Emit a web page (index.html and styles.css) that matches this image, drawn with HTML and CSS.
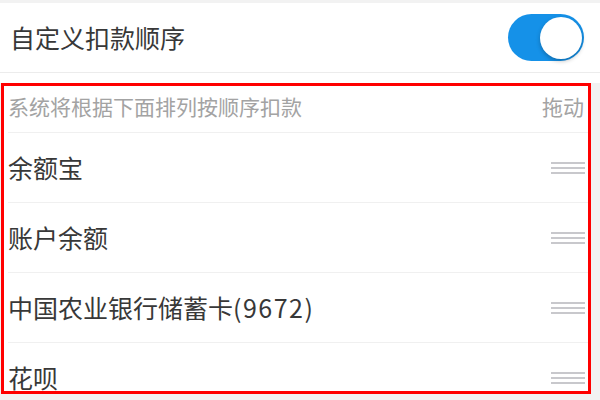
FILE: index.html
```html
<!DOCTYPE html>
<html lang="zh-CN">
<head>
<meta charset="utf-8">
<link rel="stylesheet" href="styles.css">
</head>
<body>
<div class="page">
  <div class="title-row">
    <span class="title">自定义扣款顺序</span>
    <span class="switch"><span class="knob"></span></span>
  </div>
  <div class="gap"></div>
  <section class="order">
    <div class="order-head">
      <span class="hint">系统将根据下面排列按顺序扣款</span>
      <span class="drag-label">拖动</span>
    </div>
    <div class="item"><span class="name">余额宝</span><span class="handle"><i></i><i></i><i></i></span></div>
    <div class="item"><span class="name">账户余额</span><span class="handle"><i></i><i></i><i></i></span></div>
    <div class="item"><span class="name">中国农业银行储蓄卡<span class="num">(9672)</span></span><span class="handle"><i></i><i></i><i></i></span></div>
    <div class="item last"><span class="name">花呗</span><span class="handle"><i></i><i></i><i></i></span></div>
  </section>
</div>
</body>
</html>
```

FILE: styles.css
```css
html, body {
  margin: 0;
  padding: 0;
  background: #f2f2f2;
}
body {
  width: 600px;
  height: 400px;
  overflow: hidden;
  font-family: "Noto Sans CJK SC", "Noto Sans", sans-serif;
  color: #333;
}
.page {
  padding-top: 3px;
  display: flex;
  flex-direction: column;
}
.title-row {
  background: #fff;
  height: 69px;
  border-bottom: 1px solid #ececec;
  display: flex;
  align-items: center;
  justify-content: space-between;
  padding: 0 16px 0 10px;
}
.title {
  font-size: 25px;
  line-height: 1;
  color: #383838;
}
.switch {
  width: 76px;
  height: 47px;
  border-radius: 24px;
  background: #1591e8;
  display: flex;
  align-items: center;
  justify-content: flex-end;
  padding-right: 2px;
  box-sizing: border-box;
}
.knob {
  width: 42px;
  height: 42px;
  border-radius: 50%;
  background: #fff;
  box-shadow: 0 2px 4px rgba(0,0,0,0.25);
}
.gap {
  height: 10px;
  background: #fff;
}
.order {
  margin-left: 1px;
  width: 590px;
  height: 311px;
  box-sizing: border-box;
  border: 3px solid #ff0000;
  background: #fff;
  overflow: hidden;
  padding-left: 4px;
}
.order-head {
  height: 46px;
  display: flex;
  align-items: center;
  justify-content: space-between;
  border-bottom: 1px solid #f0f0f0;
  padding-right: 4px;
  color: #a3a3a3;
  font-size: 21px;
}
.hint, .drag-label {
  line-height: 1;
  margin-top: -6px;
}
.item {
  height: 69px;
  border-bottom: 1px solid #f0f0f0;
  display: flex;
  align-items: center;
  justify-content: space-between;
  padding-right: 3px;
}
.item.last {
  border-bottom: none;
}
.name {
  font-size: 25px;
  line-height: 1;
  color: #383838;
}
.num {
  letter-spacing: 1.5px;
}
.handle {
  width: 34px;
  display: flex;
  flex-direction: column;
  gap: 3px;
}
.handle i {
  display: block;
  height: 2px;
  background: #c8c8cc;
}
```
